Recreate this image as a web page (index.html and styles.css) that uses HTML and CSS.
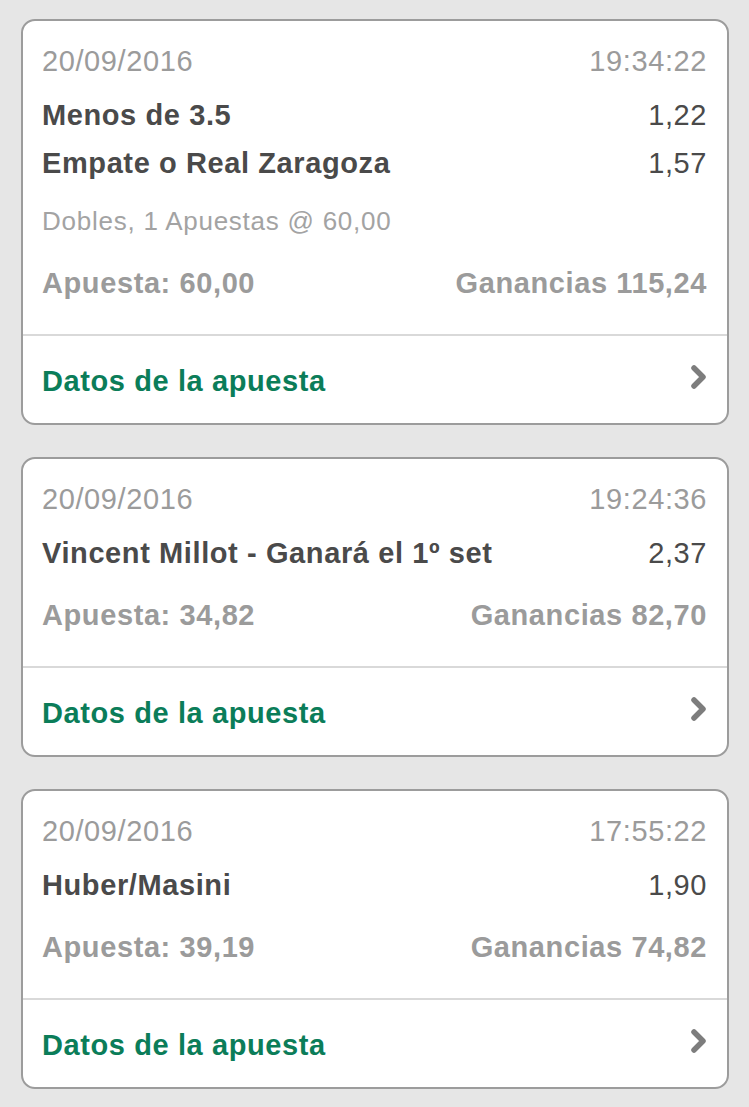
FILE: index.html
```html
<!DOCTYPE html>
<html lang="es">
<head>
    <meta charset="UTF-8">
    <meta name="viewport" content="width=device-width, initial-scale=1.0">
    <title>Mis apuestas</title>
    <link rel="stylesheet" href="styles.css">
</head>
<body>
    <!-- Bet 1 -->
    <div class="bet-card">
        <div class="bet-body">
            <div class="row meta">
                <span>20/09/2016</span>
                <span>19:34:22</span>
            </div>
            <div class="selections">
                <div class="row selection">
                    <span class="pick">Menos de 3.5</span>
                    <span class="odds">1,22</span>
                </div>
                <div class="row selection">
                    <span class="pick">Empate o Real Zaragoza</span>
                    <span class="odds">1,57</span>
                </div>
            </div>
            <div class="bet-type">Dobles, 1 Apuestas @ 60,00</div>
            <div class="row totals">
                <span>Apuesta: 60,00</span>
                <span>Ganancias 115,24</span>
            </div>
        </div>
        <div class="bet-footer">
            <span class="details-link">Datos de la apuesta</span>
            <svg class="chevron" width="18" height="26" viewBox="0 0 18 26">
                <polyline points="4,4 13,13 4,22" />
            </svg>
        </div>
    </div>

    <!-- Bet 2 -->
    <div class="bet-card">
        <div class="bet-body">
            <div class="row meta">
                <span>20/09/2016</span>
                <span>19:24:36</span>
            </div>
            <div class="selections">
                <div class="row selection">
                    <span class="pick">Vincent Millot - Ganará el 1º set</span>
                    <span class="odds">2,37</span>
                </div>
            </div>
            <div class="row totals">
                <span>Apuesta: 34,82</span>
                <span>Ganancias 82,70</span>
            </div>
        </div>
        <div class="bet-footer">
            <span class="details-link">Datos de la apuesta</span>
            <svg class="chevron" width="18" height="26" viewBox="0 0 18 26">
                <polyline points="4,4 13,13 4,22" />
            </svg>
        </div>
    </div>

    <!-- Bet 3 -->
    <div class="bet-card">
        <div class="bet-body">
            <div class="row meta">
                <span>20/09/2016</span>
                <span>17:55:22</span>
            </div>
            <div class="selections">
                <div class="row selection">
                    <span class="pick">Huber/Masini</span>
                    <span class="odds">1,90</span>
                </div>
            </div>
            <div class="row totals">
                <span>Apuesta: 39,19</span>
                <span>Ganancias 74,82</span>
            </div>
        </div>
        <div class="bet-footer">
            <span class="details-link">Datos de la apuesta</span>
            <svg class="chevron" width="18" height="26" viewBox="0 0 18 26">
                <polyline points="4,4 13,13 4,22" />
            </svg>
        </div>
    </div>
</body>
</html>
```

FILE: styles.css
```css
/* Global Styles */
body {
    margin: 0;
    padding: 19px 20px 19px 21px;
    background-color: #e6e6e6;
    font-family: "Liberation Sans", Arial, sans-serif;
    font-size: 29px;
    letter-spacing: 0.6px;
    color: #4a4a4a;
}

/* Card */
.bet-card {
    background-color: #fff;
    border: 2px solid #9c9c9c;
    border-radius: 14px;
    margin-bottom: 32px;
    overflow: hidden;
}

.bet-body {
    padding: 20px 20px 27px 19px;
}

.row {
    display: flex;
    justify-content: space-between;
    align-items: center;
}

/* Date and time */
.meta {
    height: 40px;
    color: #9b9b9b;
}

.selections {
    margin-top: 10px;
}

.selection {
    height: 48px;
}

.pick {
    font-weight: bold;
}

.odds {
    color: #4a4a4a;
}

.bet-type {
    margin-top: 10px;
    line-height: 48px;
    font-size: 26px;
    letter-spacing: 0.75px;
    color: #a3a3a3;
}

.totals {
    margin-top: 14px;
    height: 48px;
    font-weight: bold;
    color: #9b9b9b;
}

/* Footer link */
.bet-footer {
    display: flex;
    justify-content: space-between;
    align-items: center;
    border-top: 2px solid #d9d9d9;
    padding: 21px 19px 18px 19px;
    height: 48px;
}

.details-link {
    font-weight: bold;
    color: #0b7d59;
}

.chevron {
    margin-bottom: 8px;
}

.chevron polyline {
    fill: none;
    stroke: #7d7d7d;
    stroke-width: 5.5;
    stroke-linecap: round;
    stroke-linejoin: round;
}
```
